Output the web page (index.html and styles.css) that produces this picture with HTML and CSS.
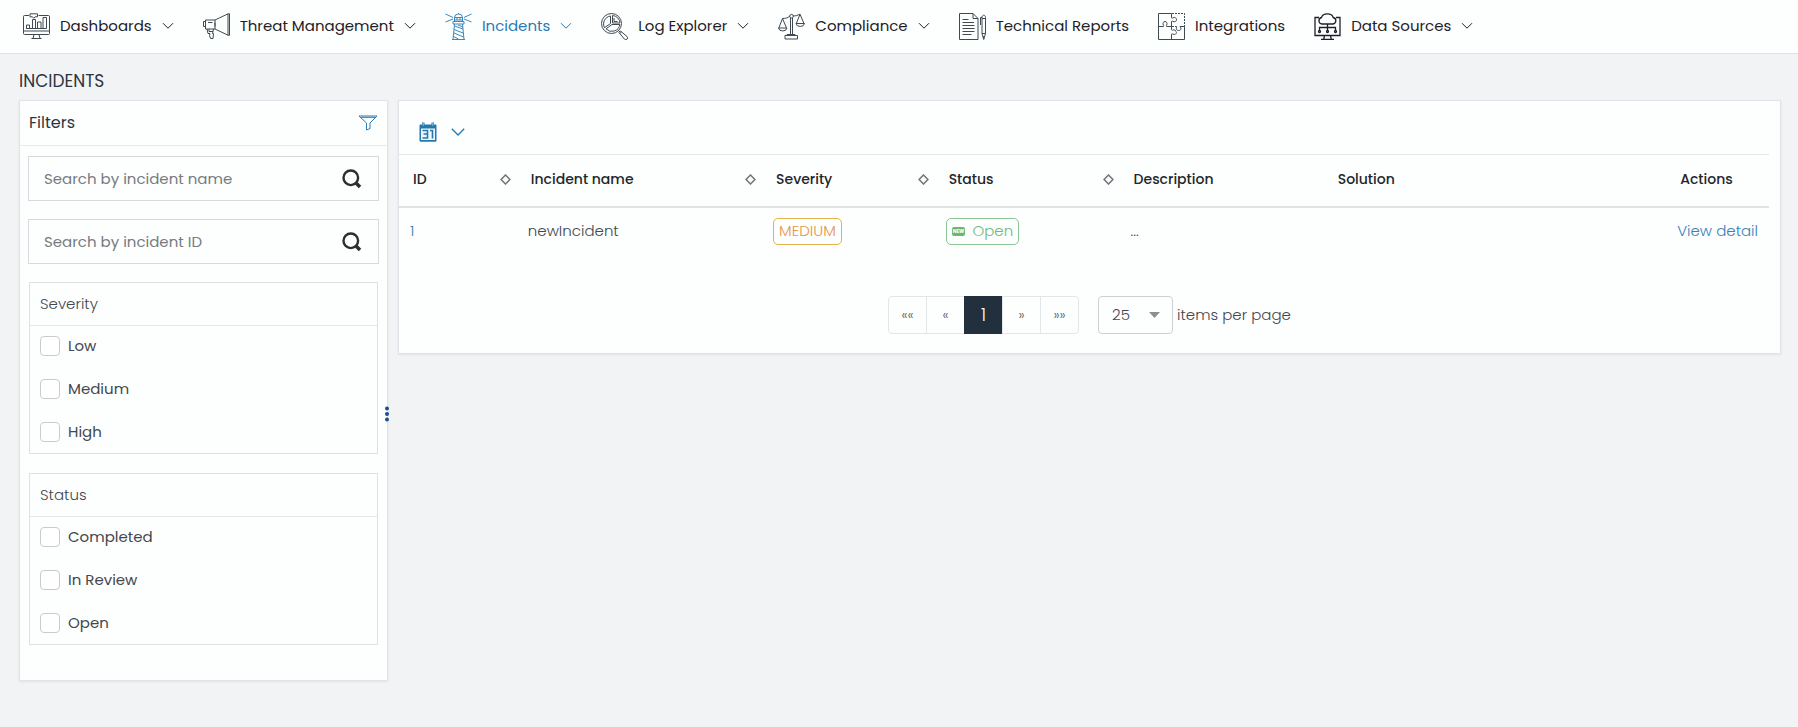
FILE: index.html
```html
<!DOCTYPE html>
<html lang="en">
<head>
<meta charset="utf-8">
<meta name="viewport" content="width=device-width, initial-scale=1">
<title>Incidents</title>
<link rel="stylesheet" href="styles.css">
</head>
<body>
<svg class="defs" aria-hidden="true">
  <symbol id="chevron" viewBox="0 0 12 8"><path d="M1 1.2l5 5 5-5"/></symbol>
  <symbol id="search" viewBox="0 0 20 20"><circle cx="8.8" cy="8.8" r="7.3"/><path d="M14 14l4 4" stroke-width="3.6"/></symbol>
  <symbol id="sort" viewBox="0 0 10 10"><path d="M5 .9L9 5 5 9.100 1 5z"/></symbol>
</svg>

<nav class="nav" aria-label="Main">
  <a class="nav-item" href="#">
    <svg class="nav-icon" viewBox="0 0 27 27"><path d="M6 2.500H1.500a1 1 0 0 0-1 1V20.500a1 1 0 0 0 1 1H25.500a1 1 0 0 0 1-1V3.500a1 1 0 0 0-1-1H15.500M.5 18h26M11 21.500l-1 4h7l-1-4M8.500 25.500h10M7 .8h7.500v3H12l-1.200 1.500L9.500 3.800H7zM3 15.500h20.500M3.500 15.500v-3.500h3v3.500M9.500 15.500v-9h3v9M14.500 15.500v-6.500h3.500v6.500M20 15.500V4.500h3.500v11"/></svg>
    <span>Dashboards</span><svg class="chevron"><use href="#chevron"/></svg>
  </a>
  <a class="nav-item" href="#">
    <svg class="nav-icon" viewBox="0 0 27 27"><path d="M2.500 7h9.500v9H2.500zM2.500 8.500H.5v5h2M12 7L25 .8M12 16l13 6.200M25 .8h1.500v21.500H25zM5 9.500h4.500M12 9.500v4M4 16l1 4.500h2l-.5 2 1 3H10l.5-5h-1l1-4.500M6 16v2.500h4"/></svg>
    <span>Threat Management</span><svg class="chevron"><use href="#chevron"/></svg>
  </a>
  <a class="nav-item active" href="#" aria-current="page">
    <svg class="nav-icon" viewBox="0 0 27 27"><path d="M9.500 8V4.500a4 3.500 0 0 1 8 0V8M9 4.500h9M13.500 1V0M9.500 7h8M8 8.500h11v2.500H8zM9.500 11L8 26.500M17.500 11L19 26.500M7 26.500h13M12 5v2M15 5v2M9.500 13l8.500 3M9 16.500l9 3.500M9 20l9.500 4M13 12l5 2M8.500 23.500l5 2.500M.5 1L8 4.500M.5 9L8 6M26.500 1L19 4.500M26.500 9L19 6"/></svg>
    <span>Incidents</span><svg class="chevron"><use href="#chevron"/></svg>
  </a>
  <a class="nav-item" href="#">
    <svg class="nav-icon" viewBox="0 0 27 27"><circle cx="10.500" cy="10.500" r="10"/><path d="M9.500 3v7.500l-6 4.200A8 8 0 0 1 9.500 3zM11.500 2.500v7.500h7.500a8 8 0 0 0-7.500-7.500zM13 5v3.500h3.500M11 11.500h7.800a8 8 0 0 1-13.800 4.300zM17 17l2 2M18 19.500l1.500-1.500 6.500 5.500a1.600 1.600 0 0 1-2.500 2.700zM20.500 18.800l-1.700 1.800"/></svg>
    <span>Log Explorer</span><svg class="chevron"><use href="#chevron"/></svg>
  </a>
  <a class="nav-item" href="#">
    <svg class="nav-icon" viewBox="0 0 27 27"><path d="M12.500 5v17M14.500 5v17M7 22.500h12.500v3.500H7zM9 22.500v-1h8v1M4.500 5.500c3 0 5-.5 7.500-2.500M15 3c3 0 4-.5 7-1.800M4.500 5.500L.8 15M4.500 5.500L8.500 15M.5 15h8.500a4.300 3.500 0 0 1-8.500 0zM22 1.200L18.300 10.500M22 1.200L26 10.500M18 10.500h8.500a4.300 3.500 0 0 1-8.500 0z"/><circle cx="13.500" cy="3.200" r="1.800"/></svg>
    <span>Compliance</span><svg class="chevron"><use href="#chevron"/></svg>
  </a>
  <a class="nav-item" href="#">
    <svg class="nav-icon" viewBox="0 0 27 27"><path d="M14 .5H.5v26H19V5.500zM14 .5v5h5M3.500 6.500h6M3.500 9.500h11.500M3.500 12.500h12M3.500 15.500h12M3.500 18.500h12M3.500 21.500h9M23 4.500c0-3 3.500-3 3.500 0V20.500h-3.500zM23 5.500h3.500M23 20.500l1.700 6 1.800-6M23 4.500h-1.500V12M24.700 23v3"/></svg>
    <span>Technical Reports</span>
  </a>
  <a class="nav-item" href="#">
    <svg class="nav-icon" viewBox="0 0 27 27"><path d="M13.500.5H.5v26h26V13.500M.5 13.500h4.500c1 0 .8-.8.300-1.500-1-2 .2-3.500 1.700-3.500s2.700 1.500 1.700 3.500c-.5.7-.7 1.500.3 1.500h4.500M13.500.5v4c0 1 .8.800 1.500.3 2-1 3.500.2 3.500 1.900s-1.500 2.700-3.500 1.700c-.7-.5-1.500-.7-1.500.3v4.800h2.500M13.500 13.500v3c0 1 .8.800 1.500.6 1-.6 3-.1 3 1.600M13.500 26.500v-5c0-1 .8-.8 1.500-.3 2 .9 3.500-.4 3.500-1.900M17 13.500h1.500c0 1.500-.7 4 2 4s3-2 1.500-4h4.500"/><path d="M14 .5h12.500v13" stroke-dasharray="2 1"/></svg>
    <span>Integrations</span>
  </a>
  <a class="nav-item" href="#">
    <svg class="nav-icon dark" viewBox="0 0 27 27"><path d="M5 4.500H1v18h25V4.500h-4M10.500 22.500l-.7 3.500M16.500 22.500l.7 3.500M7 26.300h13M8 11a3.300 3.300 0 0 1-.5-6.500 6 4.700 0 0 1 11.700 0A3.300 3.300 0 0 1 19 11zM13.500 11v6M5.500 17v-2.500h16v2.500"/><circle cx="5.500" cy="18.500" r="1"/><circle cx="13.500" cy="18.500" r="1"/><circle cx="21.500" cy="18.500" r="1"/></svg>
    <span>Data Sources</span><svg class="chevron"><use href="#chevron"/></svg>
  </a>
</nav>

<main class="page">
  <h1 class="page-title">INCIDENTS</h1>
  <div class="layout">
    <aside class="card filters">
      <header class="filters-head">
        <h2>Filters</h2>
        <button class="icon-btn" type="button" aria-label="Toggle filters">
          <svg class="funnel" viewBox="0 0 20 16"><path d="M1 1h18l-7 7v5.500l-3.500 1.500V8z"/><path d="M3 2.300h14"/></svg>
        </button>
      </header>
      <div class="filters-body">
        <div class="search">
          <input type="text" placeholder="Search by incident name" aria-label="Search by incident name">
          <button class="icon-btn" type="button" aria-label="Search name"><svg class="glass"><use href="#search"/></svg></button>
        </div>
        <div class="search">
          <input type="text" placeholder="Search by incident ID" aria-label="Search by incident ID">
          <button class="icon-btn" type="button" aria-label="Search ID"><svg class="glass"><use href="#search"/></svg></button>
        </div>
        <section class="group">
          <h3>Severity</h3>
          <div class="checks">
            <label class="check"><input type="checkbox"><span>Low</span></label>
            <label class="check"><input type="checkbox"><span>Medium</span></label>
            <label class="check"><input type="checkbox"><span>High</span></label>
          </div>
        </section>
        <section class="group">
          <h3>Status</h3>
          <div class="checks">
            <label class="check"><input type="checkbox"><span>Completed</span></label>
            <label class="check"><input type="checkbox"><span>In Review</span></label>
            <label class="check"><input type="checkbox"><span>Open</span></label>
          </div>
        </section>
      </div>
    </aside>

    <div class="gutter">
      <svg class="grip" viewBox="0 0 4 16"><circle cx="2" cy="2.500" r="2"/><circle cx="2" cy="8" r="2"/><circle cx="2" cy="13.500" r="2"/></svg>
    </div>

    <section class="card results">
      <div class="toolbar">
        <button class="date-btn" type="button" aria-label="Date range">
          <svg class="calendar" viewBox="0 0 18 20"><path class="solid" d="M1.500 2.500H3V.5h2.500v2h7v-2H15v2h1.500a1 1 0 0 1 1 1v15a1.300 1.300 0 0 1-1.300 1.300H1.800A1.300 1.300 0 0 1 .5 18.500v-15a1 1 0 0 1 1-1z"/><path class="hole" d="M2 6.500h14v11.500H2z"/><path class="digits" d="M3.500 8.500h5v7.500h-5M4.500 12h4M11 8.500h2.500V16.500"/><path class="rings" d="M4.200.3v3.500M13.800.3v3.500"/></svg>
          <svg class="chevron big" viewBox="0 0 14 8"><path d="M.8.800L7 7 13.200.8"/></svg>
        </button>
      </div>
      <table class="table">
        <colgroup><col class="c-id"><col class="c-name"><col class="c-sev"><col class="c-status"><col class="c-desc"><col class="c-sol"><col class="c-act"></colgroup>
        <thead>
          <tr>
            <th><div class="th">ID<svg class="sort"><use href="#sort"/></svg></div></th>
            <th><div class="th">Incident name<svg class="sort"><use href="#sort"/></svg></div></th>
            <th><div class="th">Severity<svg class="sort"><use href="#sort"/></svg></div></th>
            <th><div class="th">Status<svg class="sort"><use href="#sort"/></svg></div></th>
            <th>Description</th>
            <th>Solution</th>
            <th>Actions</th>
          </tr>
        </thead>
        <tbody>
          <tr>
            <td><a href="#">1</a></td>
            <td>newIncident</td>
            <td><span class="badge medium">MEDIUM</span></td>
            <td><span class="badge open"><span class="new">NEW</span>Open</span></td>
            <td>...</td>
            <td></td>
            <td><a href="#">View detail</a></td>
          </tr>
        </tbody>
      </table>
      <footer class="pager">
        <div class="pages">
          <button type="button" aria-label="First">««</button>
          <button type="button" aria-label="Previous">«</button>
          <button type="button" class="current">1</button>
          <button type="button" aria-label="Next">»</button>
          <button type="button" aria-label="Last">»»</button>
        </div>
        <div class="per-page">
          <div class="select">
            <select id="size"><option>25</option><option>50</option></select>
            <svg class="caret" viewBox="0 0 11 6"><path d="M0 0h11L5.500 6z"/></svg>
          </div>
          <label for="size">items per page</label>
        </div>
      </footer>
    </section>
  </div>
</main>
</body>
</html>
```
FILE: styles.css
```css
* { box-sizing: border-box; }

body {
  margin: 0;
  background: #f2f3f5;
  color: #44474d;
  font: 400 15px/24px Poppins, Inter, sans-serif;
}

button, input, select { font: inherit; color: inherit; }
h1, h2, h3 { margin: 0; font-weight: 400; }
a { color: #3a80b3; text-decoration: none; }
svg { display: block; fill: none; stroke: currentColor; flex: none; }
.defs { position: absolute; width: 0; height: 0; }

/* Top navigation */
.nav {
  display: flex;
  gap: 29px;
  height: 54px;
  padding: 0 23px 1px;
  align-items: center;
  background: #fdfefe;
  border-bottom: 1px solid #dfe1e3;
}
.nav-item {
  display: flex;
  align-items: center;
  gap: 10px;
  color: #1d2126;
  white-space: nowrap;
}
.nav-item.active { color: #2a7ab3; }
.nav-icon { width: 27px; height: 27px; color: #3f4a52; }
.nav-icon.dark { color: #1d2126; stroke-width: 1.3; }
.active .nav-icon { color: #3a88bd; }
.chevron { width: 12px; height: 8px; }

/* Page */
.page { padding: 15px 17px 0 19px; }
.page-title { font-size: 17px; color: #2b3640; margin-bottom: 7px; }
.layout {
  display: flex;
  align-items: flex-start;
  min-height: calc(100vh - 100px);
}
.card {
  background: #fdfefe;
  border: 1px solid #e1e3e6;
  box-shadow: 0 1px 2px #e1e3e6;
}
.icon-btn { padding: 0; border: 0; background: none; cursor: pointer; }

/* Filters */
.filters { width: 369px; flex: none; }
.filters-head {
  display: flex;
  justify-content: space-between;
  align-items: center;
  height: 45px;
  padding: 0 9px;
  border-bottom: 1px solid #e8eaec;
}
.filters-head h2 { font-size: 16px; color: #2b3640; }
.funnel { width: 20px; height: 16px; color: #2a7ab3; }
.filters-body { padding: 10px 8px 35px; }
.search {
  display: flex;
  align-items: center;
  height: 45px;
  margin-bottom: 18px;
  padding: 0 16px 0 15px;
  border: 1px solid #d8dbde;
}
.search input {
  flex: 1;
  min-width: 0;
  padding: 0;
  border: 0;
  outline: 0;
  background: none;
}
.search input::placeholder { color: #757b80; opacity: 1; }
.glass { width: 20px; height: 20px; color: #2c2f31; stroke-width: 2.4; }
.group {
  margin: 0 1px 19px;
  border: 1px solid #dfe2e5;
}
.group:last-child { margin-bottom: 0; }
.group h3 {
  padding: 9px 10px;
  border-bottom: 1px solid #e4e7e9;
  font-size: 15px;
  font-weight: 300;
  color: #44474d;
}
.checks { display: grid; gap: 3px; padding-bottom: 1px; }
.check {
  display: flex;
  align-items: center;
  gap: 8px;
  height: 40px;
  padding: 0 10px;
}
.check input {
  appearance: none;
  width: 20px;
  height: 20px;
  margin: 0;
  border: 1px solid #c9cbce;
  border-radius: 4px;
  background: #fff;
}

/* Splitter */
.gutter {
  display: flex;
  align-items: center;
  align-self: stretch;
  width: 10px;
  flex: none;
}
.grip {
  width: 4px;
  height: 16px;
  margin-left: -3px;
  z-index: 1;
  fill: #1a4f95;
  stroke: none;
}

/* Results */
.results { flex: 1; min-width: 0; padding-right: 11px; }
.toolbar { display: flex; height: 54px; padding: 8px 20px 0; align-items: center; border-bottom: 1px solid #e4e7e9; }
.date-btn {
  display: flex;
  align-items: center;
  gap: 14px;
  padding: 0;
  border: 0;
  background: none;
  color: #2478ae;
}
.calendar { width: 18px; height: 20px; }
.solid { fill: currentColor; stroke: none; }
.hole { fill: #eef6fb; stroke: none; }
.digits { stroke-width: 1.6; }
.rings { stroke: #a5cbe2; }
.chevron.big { width: 14px; stroke-width: 1.3; }

.table { width: 100%; border-collapse: collapse; table-layout: fixed; }
.c-id { width: 8.6%; }
.c-name { width: 17.9%; }
.c-sev { width: 12.6%; }
.c-status { width: 13.5%; }
.c-desc { width: 14.9%; }
.c-sol { width: 25%; }
.c-act { width: 7.5%; }
.table th {
  height: 52px;
  padding: 0 6px 3px 14px;
  border-bottom: 2px solid #dfe3e4;
  font-size: 14px;
  font-weight: 500;
  text-align: left;
  color: #22262a;
}
.th { display: flex; align-items: center; justify-content: space-between; }
.sort { width: 11px; height: 11px; color: #73777b; stroke-width: 1.4; }
.table td { height: 48px; padding: 0 0 1px 11px; font-weight: 300; white-space: nowrap; }
.badge {
  display: inline-flex;
  align-items: center;
  gap: 7px;
  height: 27px;
  padding: 0 5px;
  border: 1px solid;
  border-radius: 5px;
  vertical-align: middle;
}
.medium { color: #e6954b; border-color: #e5b04e; }
.open { color: #71b977; border-color: #8cc592; }
.new {
  padding: 0 1px;
  border-radius: 2px;
  background: #6bb671;
  color: #fff;
  font-size: 5px;
  font-weight: 700;
  line-height: 9px;
}

.pager { display: flex; justify-content: center; gap: 20px; padding: 41px 0 19px 11px; }
.pages { display: flex; }
.pages button {
  width: 39px;
  height: 38px;
  margin-right: -1px;
  padding: 0;
  border: 1px solid #e3e5e7;
  background: #fdfefe;
  font-size: 14px;
  font-weight: 300;
  color: #5c6167;
}
.pages button:first-child { border-radius: 4px 0 0 4px; }
.pages button:last-child { border-radius: 0 4px 4px 0; }
.pages .current { background: #222f3c; border-color: #222f3c; color: #fff; font-size: 17px; }
.per-page { display: flex; align-items: center; gap: 4px; font-size: 15px; font-weight: 300; }
.select { display: grid; align-items: center; }
.select select {
  grid-area: 1 / 1;
  appearance: none;
  width: 75px;
  height: 38px;
  padding: 0 13px;
  border: 1px solid #cdd0d3;
  border-radius: 4px;
  background: #fdfefe;
}
.caret {
  grid-area: 1 / 1;
  justify-self: end;
  width: 11px;
  height: 6px;
  margin-right: 13px;
  fill: #8c8f92;
  stroke: none;
  pointer-events: none;
}
```
